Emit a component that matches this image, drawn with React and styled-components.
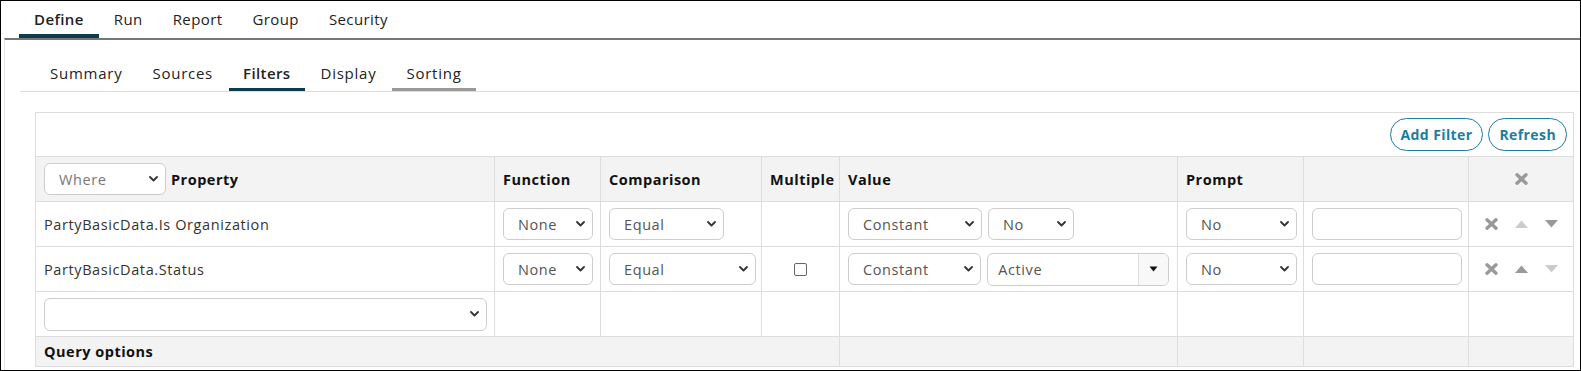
import React from "react";
import styled, { createGlobalStyle } from "styled-components";

const Global = createGlobalStyle`
  html, body { margin: 0; padding: 0; background: #fff; }
  body { font-family: "Open Sans", "Noto Sans", sans-serif; color: #222; }
  * { box-sizing: border-box; }
`;

const Frame = styled.div`
  width: 1581px;
  height: 371px;
  border: 1px solid #000;
  overflow: hidden;
  background: #fff;
`;

const TopTabs = styled.div`
  display: flex;
  padding-left: 18px;
`;

const TopTab = styled.div`
  height: 37px;
  padding: 3px 15px 0;
  display: flex;
  align-items: center;
  font-size: 15px;
  letter-spacing: 0.4px;
  font-weight: ${(p) => (p.$active ? 600 : 400)};
  color: #222;
  border-bottom: 4px solid ${(p) => (p.$active ? "#0d3c4c" : "transparent")};
`;

const Panel = styled.div`
  margin-left: 3px;
  border-top: 2px solid #777;
  border-left: 1px solid #e6e6e6;
  padding-top: 15px;
  height: 400px;
`;

const SubTabs = styled.div`
  display: flex;
  gap: 2px;
  margin-left: 15px;
  padding-left: 16px;
  border-bottom: 1px solid #ddd;
`;

const SubTab = styled.div`
  height: 36px;
  padding: 3px 14px 0;
  display: flex;
  align-items: center;
  font-size: 15px;
  letter-spacing: ${(p) => (p.$active ? 0.4 : 0.75)}px;
  font-weight: ${(p) => (p.$active ? 600 : 400)};
  color: #222;
  border-bottom: 3px solid ${(p) => p.$line || "transparent"};
`;

const Content = styled.div`
  margin: 20px 6px 0 30px;
`;

const Toolbar = styled.div`
  height: 44px;
  border: 1px solid #ddd;
  border-bottom: none;
  display: flex;
  justify-content: flex-end;
  align-items: center;
  gap: 5px;
  padding-right: 6px;
`;

const PillButton = styled.button`
  height: 33px;
  padding: 0 10px;
  border: 1px solid #1a7ea0;
  border-radius: 17px;
  background: #fff;
  color: #1a7ea0;
  font-family: inherit;
  font-size: 14px;
  letter-spacing: 0.4px;
  font-weight: 700;
  cursor: pointer;
`;

const Table = styled.table`
  width: 100%;
  border-collapse: collapse;
  table-layout: fixed;
`;

const Row = styled.tr`
  height: ${(p) => p.$h || 45}px;
  background: ${(p) => (p.$shade ? "#f3f3f3" : "#fff")};
`;

const Cell = styled.td`
  border: 1px solid #ddd;
  padding: 0 ${(p) => (p.$pr != null ? p.$pr : 8)}px 0 8px;
  vertical-align: middle;
  font-size: 14.5px;
  letter-spacing: ${(p) => (p.$bold ? 0.5 : 0.6)}px;
  color: ${(p) => (p.$bold ? "#111" : "#333")};
  font-weight: ${(p) => (p.$bold ? 700 : 400)};
  text-align: ${(p) => p.$align || "left"};
  white-space: nowrap;
`;

const HeadFlex = styled.div`
  display: flex;
  align-items: center;
  gap: 5px;
`;

const Inline = styled.div`
  display: flex;
  align-items: center;
  gap: 6px;
`;

const SelectBox = styled.div`
  width: ${(p) => (p.$w ? `${p.$w}px` : "100%")};
  height: ${(p) => p.$h || 32}px;
  border: 1px solid #cdcdcd;
  border-radius: 6px;
  background: #fff;
  display: flex;
  align-items: center;
  justify-content: space-between;
  padding: 0 7px 0 14px;
  font-size: 14.5px;
  letter-spacing: 0.6px;
  font-weight: 400;
  color: ${(p) => (p.$muted ? "#777" : "#555")};
`;

const ComboBox = styled.div`
  width: ${(p) => p.$w}px;
  height: 33px;
  border: 1px solid #cdcdcd;
  border-radius: 6px;
  display: flex;
  overflow: hidden;
  font-size: 14.5px;
  letter-spacing: 0.6px;
  color: #555;
`;

const ComboText = styled.div`
  flex: 1;
  display: flex;
  align-items: center;
  padding: 1px 0 0 10px;
`;

const ComboButton = styled.div`
  width: 30px;
  border-left: 1px solid #ddd;
  background: #f8f8f8;
  display: flex;
  align-items: center;
  justify-content: center;
`;

const TextInput = styled.div`
  width: ${(p) => p.$w}px;
  height: 32px;
  border: 1px solid #cdcdcd;
  border-radius: 6px;
  background: #fff;
`;

const Check = styled.div`
  width: 13px;
  height: 13px;
  border: 1px solid #666;
  border-radius: 2px;
  margin: 0 auto;
`;

const Actions = styled.div`
  display: flex;
  align-items: center;
  justify-content: center;
  gap: 17px;
`;

const Chevron = () => (
  <svg width="9" height="6" viewBox="0 0 9 6">
    <path d="M1 1 L4.5 4.5 L8 1" fill="none" stroke="#333" strokeWidth="1.8" strokeLinecap="round" strokeLinejoin="round" />
  </svg>
);

const Caret = () => (
  <svg width="9" height="6" viewBox="0 0 9 6">
    <path d="M0.5 0.5 H8.5 L4.5 5.5 Z" fill="#111" />
  </svg>
);

const XIcon = ({ color = "#999" }) => (
  <svg width="13" height="12" viewBox="0 0 13 12">
    <path d="M2 1.8 L11 10.2 M11 1.8 L2 10.2" stroke={color} strokeWidth="3.4" strokeLinecap="round" />
  </svg>
);

const Tri = ({ up, color }) => (
  <svg width="13" height="8" viewBox="0 0 13 8">
    <path d={up ? "M0 8 L6.5 0.5 L13 8 Z" : "M0 0 L13 0 L6.5 7.5 Z"} fill={color} />
  </svg>
);

const Select = ({ w, h, muted, children }) => (
  <SelectBox $w={w} $h={h} $muted={muted}>
    <span>{children}</span>
    <Chevron />
  </SelectBox>
);

const topTabs = ["Define", "Run", "Report", "Group", "Security"];
const subTabs = [
  { t: "Summary" },
  { t: "Sources" },
  { t: "Filters", active: true, line: "#0d3c4c" },
  { t: "Display" },
  { t: "Sorting", line: "#9a9a9a" },
];

const rows = [
  { prop: "PartyBasicData.Is Organization", cmpW: 115, multi: false, value: "No", up: "#ccc", down: "#999" },
  { prop: "PartyBasicData.Status", cmpW: 147, multi: true, value: "Active", up: "#999", down: "#ccc" },
];

export default function App() {
  return (
    <>
      <Global />
      <Frame>
        <TopTabs>
          {topTabs.map((t, i) => (
            <TopTab key={t} $active={i === 0}>{t}</TopTab>
          ))}
        </TopTabs>
        <Panel>
          <SubTabs>
            {subTabs.map((s) => (
              <SubTab key={s.t} $active={s.active} $line={s.line}>{s.t}</SubTab>
            ))}
          </SubTabs>
          <Content>
            <Toolbar>
              <PillButton>Add Filter</PillButton>
              <PillButton>Refresh</PillButton>
            </Toolbar>
            <Table>
              <colgroup>
                <col style={{ width: 459 }} />
                <col style={{ width: 106 }} />
                <col style={{ width: 161 }} />
                <col style={{ width: 78 }} />
                <col style={{ width: 338 }} />
                <col style={{ width: 126 }} />
                <col style={{ width: 165 }} />
                <col style={{ width: 105 }} />
              </colgroup>
              <tbody>
                <Row $shade>
                  <Cell $bold>
                    <HeadFlex>
                      <Select w={122} muted>Where</Select>
                      <span>Property</span>
                    </HeadFlex>
                  </Cell>
                  <Cell $bold>Function</Cell>
                  <Cell $bold>Comparison</Cell>
                  <Cell $bold $pr={0}>Multiple</Cell>
                  <Cell $bold>Value</Cell>
                  <Cell $bold>Prompt</Cell>
                  <Cell />
                  <Cell $align="center"><XIcon /></Cell>
                </Row>
                {rows.map((r) => (
                  <Row key={r.prop}>
                    <Cell>{r.prop}</Cell>
                    <Cell><Select w={90}>None</Select></Cell>
                    <Cell><Select w={r.cmpW}>Equal</Select></Cell>
                    <Cell>{r.multi && <Check />}</Cell>
                    <Cell>
                      <Inline>
                        <Select w={134}>Constant</Select>
                        {r.value === "Active" ? (
                          <ComboBox $w={183}>
                            <ComboText>Active</ComboText>
                            <ComboButton><Caret /></ComboButton>
                          </ComboBox>
                        ) : (
                          <Select w={86}>No</Select>
                        )}
                      </Inline>
                    </Cell>
                    <Cell><Select w={111}>No</Select></Cell>
                    <Cell><TextInput $w={150} /></Cell>
                    <Cell>
                      <Actions>
                        <XIcon />
                        <Tri up color={r.up} />
                        <Tri color={r.down} />
                      </Actions>
                    </Cell>
                  </Row>
                ))}
                <Row>
                  <Cell $pr={7}><Select h={33} /></Cell>
                  <Cell />
                  <Cell />
                  <Cell />
                  <Cell />
                  <Cell />
                  <Cell />
                  <Cell />
                </Row>
                <Row $shade $h={30}>
                  <Cell $bold colSpan={4}>Query options</Cell>
                  <Cell />
                  <Cell />
                  <Cell />
                  <Cell />
                </Row>
              </tbody>
            </Table>
          </Content>
        </Panel>
      </Frame>
    </>
  );
}
